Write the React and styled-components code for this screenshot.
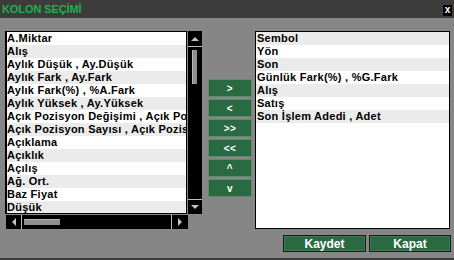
import React from 'react';
import styled, { createGlobalStyle } from 'styled-components';

const Global = createGlobalStyle`
  html, body { margin: 0; padding: 0; background: #868686; }
  body { font-family: "Liberation Sans", Arial, sans-serif; }
  * { box-sizing: border-box; }
`;

const Window = styled.div`
  width: 454px;
  height: 260px;
  background: #868686;
  border-bottom: 2px solid #3a3a3a;
  display: flex;
  flex-direction: column;
  overflow: hidden;
`;

const TitleBar = styled.div`
  height: 18px;
  flex-shrink: 0;
  background: #3c3c3c;
  display: flex;
  align-items: center;
  justify-content: space-between;
  padding: 0 2px 0 2px;
`;

const Title = styled.div`
  color: #22b04f;
  font: bold 11px "Liberation Sans", Arial, sans-serif;
  letter-spacing: -0.1px;
`;

const Close = styled.div`
  width: 9px;
  height: 11px;
  margin-top: 2px;
  background: #000;
  color: #fff;
  font: bold 10px "Liberation Sans", Arial, sans-serif;
  display: flex;
  align-items: center;
  justify-content: center;
  line-height: 1;
  padding-bottom: 1px;
`;

const Main = styled.div`
  display: flex;
  padding: 13px 0 0 5px;
  height: 211px;
`;

const LeftCol = styled.div`
  width: 197px;
  display: flex;
  flex-direction: column;
`;

const ListWithScroll = styled.div`
  display: flex;
  height: 183px;
`;

const List = styled.div`
  width: ${p => p.$w}px;
  height: ${p => p.$h}px;
  background: #fff;
  border: 1px solid #000;
  border-left-width: ${p => p.$bl}px;
  overflow: hidden;
`;

const Row = styled.div`
  height: 13px;
  line-height: 13px;
  padding-left: ${p => p.$pl}px;
  background: ${p => (p.$shade ? '#ebebeb' : '#fff')};
  color: #000;
  font: bold 11px "Liberation Sans", Arial, sans-serif;
  letter-spacing: 0.25px;
  white-space: nowrap;
  overflow: hidden;
`;

const VScroll = styled.div`
  width: 14px;
  margin-left: 1px;
  background: #000;
  display: flex;
  flex-direction: column;
`;

const ArrowBox = styled.div`
  flex-shrink: 0;
  display: flex;
  align-items: center;
  justify-content: center;
  width: ${p => p.$w}px;
  height: ${p => p.$h}px;
  ${p => p.$sep}: 1px solid #bdbdbd;
`;

const VTrack = styled.div`
  flex: 1;
  padding: 3px 0 0 4px;
`;

const VThumb = styled.div`
  width: 5px;
  height: 34px;
  background: #8e8e8e;
  border-left: 1px solid #b5b5b5;
`;

const HScroll = styled.div`
  margin-top: 1px;
  width: 182px;
  height: 14px;
  background: #000;
  display: flex;
  margin-left: 1px;
`;

const HTrack = styled.div`
  flex: 1;
  padding: 4px 0 0 2px;
`;

const HThumb = styled.div`
  width: 36px;
  height: 6px;
  background: #8e8e8e;
  border-top: 1px solid #b5b5b5;
`;

const MidCol = styled.div`
  width: 44px;
  margin-left: 6px;
  padding-top: 48px;
  display: flex;
  flex-direction: column;
  gap: 2px;
`;

const MoveButton = styled.div`
  height: 18px;
  background: #2a6a43;
  border: 1px solid #5f8b6c;
  color: #fff;
  font: bold 10px "Liberation Sans", Arial, sans-serif;
  display: flex;
  align-items: center;
  justify-content: center;
  letter-spacing: 0.5px;
`;

const RightCol = styled.div`
  margin-left: 3px;
`;

const Footer = styled.div`
  display: flex;
  justify-content: flex-end;
  gap: 3px;
  padding: 6px 3px 0 0;
`;

const ActionButton = styled.div`
  width: ${p => p.$w}px;
  height: 17px;
  background: #2a6a43;
  border: 1px solid #1a1a1a;
  box-shadow: inset 0 0 0 1px #3d7a52;
  color: #fff;
  font: bold 12px "Liberation Sans", Arial, sans-serif;
  display: flex;
  align-items: center;
  justify-content: center;
`;

const Tri = ({ dir }) => {
  const pts = {
    up: '0,4 4,0 8,4',
    down: '0,0 8,0 4,4',
    left: '4,0 4,8 0,4',
    right: '0,0 0,8 4,4',
  }[dir];
  const horiz = dir === 'left' || dir === 'right';
  return (
    <svg width={horiz ? 4 : 8} height={horiz ? 8 : 4} viewBox={horiz ? '0 0 4 8' : '0 0 8 4'}>
      <polygon points={pts} fill="#c4c4c4" />
    </svg>
  );
};

const leftItems = [
  'A.Miktar',
  'Alış',
  'Aylık Düşük , Ay.Düşük',
  'Aylık Fark , Ay.Fark',
  'Aylık Fark(%) , %A.Fark',
  'Aylık Yüksek , Ay.Yüksek',
  'Açık Pozisyon Değişimi , Açık Pozisyon Değişimi',
  'Açık Pozisyon Sayısı , Açık Pozisyon Sayısı',
  'Açıklama',
  'Açıklık',
  'Açılış',
  'Ağ. Ort.',
  'Baz Fiyat',
  'Düşük',
];

const rightItems = [
  'Sembol',
  'Yön',
  'Son',
  'Günlük Fark(%) , %G.Fark',
  'Alış',
  'Satış',
  'Son İşlem Adedi , Adet',
];

const moves = ['>', '<', '>>', '<<', '^', 'v'];

export default function App() {
  return (
    <>
      <Global />
      <Window>
        <TitleBar>
          <Title>KOLON SEÇİMİ</Title>
          <Close>x</Close>
        </TitleBar>
        <Main>
          <LeftCol>
            <ListWithScroll>
              <List $w={182} $h={183} $bl={2}>
                {leftItems.map((t, i) => (
                  <Row key={i} $shade={i % 2 === 1} $pl={0}>{t}</Row>
                ))}
              </List>
              <VScroll>
                <ArrowBox $w={14} $h={16} $sep="border-bottom"><Tri dir="up" /></ArrowBox>
                <VTrack><VThumb /></VTrack>
                <ArrowBox $w={14} $h={15} $sep="border-top"><Tri dir="down" /></ArrowBox>
              </VScroll>
            </ListWithScroll>
            <HScroll>
              <ArrowBox $w={16} $h={14} $sep="border-right"><Tri dir="left" /></ArrowBox>
              <HTrack><HThumb /></HTrack>
              <ArrowBox $w={17} $h={14} $sep="border-left"><Tri dir="right" /></ArrowBox>
            </HScroll>
          </LeftCol>
          <MidCol>
            {moves.map(m => <MoveButton key={m}>{m}</MoveButton>)}
          </MidCol>
          <RightCol>
            <List $w={195} $h={198} $bl={1}>
              {rightItems.map((t, i) => (
                <Row key={i} $shade={i % 2 === 0} $pl={1}>{t}</Row>
              ))}
            </List>
          </RightCol>
        </Main>
        <Footer>
          <ActionButton $w={83}>Kaydet</ActionButton>
          <ActionButton $w={82}>Kapat</ActionButton>
        </Footer>
      </Window>
    </>
  );
}
